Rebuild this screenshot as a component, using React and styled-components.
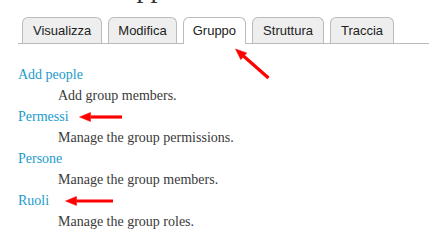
import React from "react";
import styled, { createGlobalStyle } from "styled-components";

const Global = createGlobalStyle`
  html, body { margin: 0; padding: 0; background: #fff; overflow: hidden; }
  body { width: 429px; height: 249px; }
`;

const Page = styled.div`
  position: relative;
  width: 429px;
  height: 249px;
  overflow: hidden;
`;

const Title = styled.h1`
  margin: -26px 0 0 93px;
  height: 28px;
  font: normal 28px/28px "Liberation Serif", serif;
  color: #333;
`;

const Tabs = styled.ul`
  display: flex;
  align-items: flex-end;
  gap: 6px;
  list-style: none;
  margin: 15px 0 0 18px;
  padding: 0 0 0 4px;
  border-bottom: 1px solid #bbb;
`;

const Tab = styled.li`
  box-sizing: border-box;
  height: ${(p) => (p.$active ? 27 : 26)}px;
  margin-bottom: ${(p) => (p.$active ? -1 : 0)}px;
  padding: 0 ${(p) => p.$pad || 10}px;
  border: 1px solid #bbb;
  border-bottom: none;
  border-radius: 6px 6px 0 0;
  background: ${(p) => (p.$active ? "#fff" : "#eee")};
  font: 13px/25px "Liberation Sans", Arial, sans-serif;
  color: #222;
  white-space: nowrap;
`;

const List = styled.dl`
  margin: 20px 0 0 18px;
  font: 14px/21px "Liberation Serif", serif;
`;

const Term = styled.dt`
  margin: 0;
  color: #1a9bcc;
`;

const Desc = styled.dd`
  margin: 0 0 0 40px;
  color: #3a3a3a;
`;

const Overlay = styled.svg`
  position: absolute;
  left: 0;
  top: 0;
  pointer-events: none;
`;

const tabs = [
  { label: "Visualizza", pad: 10 },
  { label: "Modifica", pad: 9 },
  { label: "Gruppo", pad: 9, active: true },
  { label: "Struttura", pad: 10 },
  { label: "Traccia", pad: 10 },
];

const items = [
  ["Add people", "Add group members."],
  ["Permessi", "Manage the group permissions."],
  ["Persone", "Manage the group members."],
  ["Ruoli", "Manage the group roles."],
];

function Arrow({ x1, y1, x2, y2 }) {
  const ang = Math.atan2(y2 - y1, x2 - x1);
  const len = 11;
  const half = 4.5;
  const bx = x2 - len * Math.cos(ang);
  const by = y2 - len * Math.sin(ang);
  const px = -Math.sin(ang) * half;
  const py = Math.cos(ang) * half;
  return (
    <g fill="#f00" stroke="#f00">
      <line x1={x1} y1={y1} x2={bx} y2={by} strokeWidth="3.2" />
      <polygon
        points={`${x2},${y2} ${bx + px},${by + py} ${bx - px},${by - py}`}
        strokeWidth="0.5"
      />
    </g>
  );
}

export default function App() {
  return (
    <Page>
      <Global />
      <Title>Gruppo</Title>
      <Tabs>
        {tabs.map((t) => (
          <Tab key={t.label} $active={t.active} $pad={t.pad}>
            {t.label}
          </Tab>
        ))}
      </Tabs>
      <List>
        {items.map(([t, d]) => (
          <React.Fragment key={t}>
            <Term>{t}</Term>
            <Desc>{d}</Desc>
          </React.Fragment>
        ))}
      </List>
      <Overlay width="429" height="249" viewBox="0 0 429 249">
        <Arrow x1={268.5} y1={78} x2={235.5} y2={49} />
        <Arrow x1={122} y1={117} x2={79.5} y2={117} />
        <Arrow x1={113} y1={201} x2={65.5} y2={201} />
      </Overlay>
    </Page>
  );
}
